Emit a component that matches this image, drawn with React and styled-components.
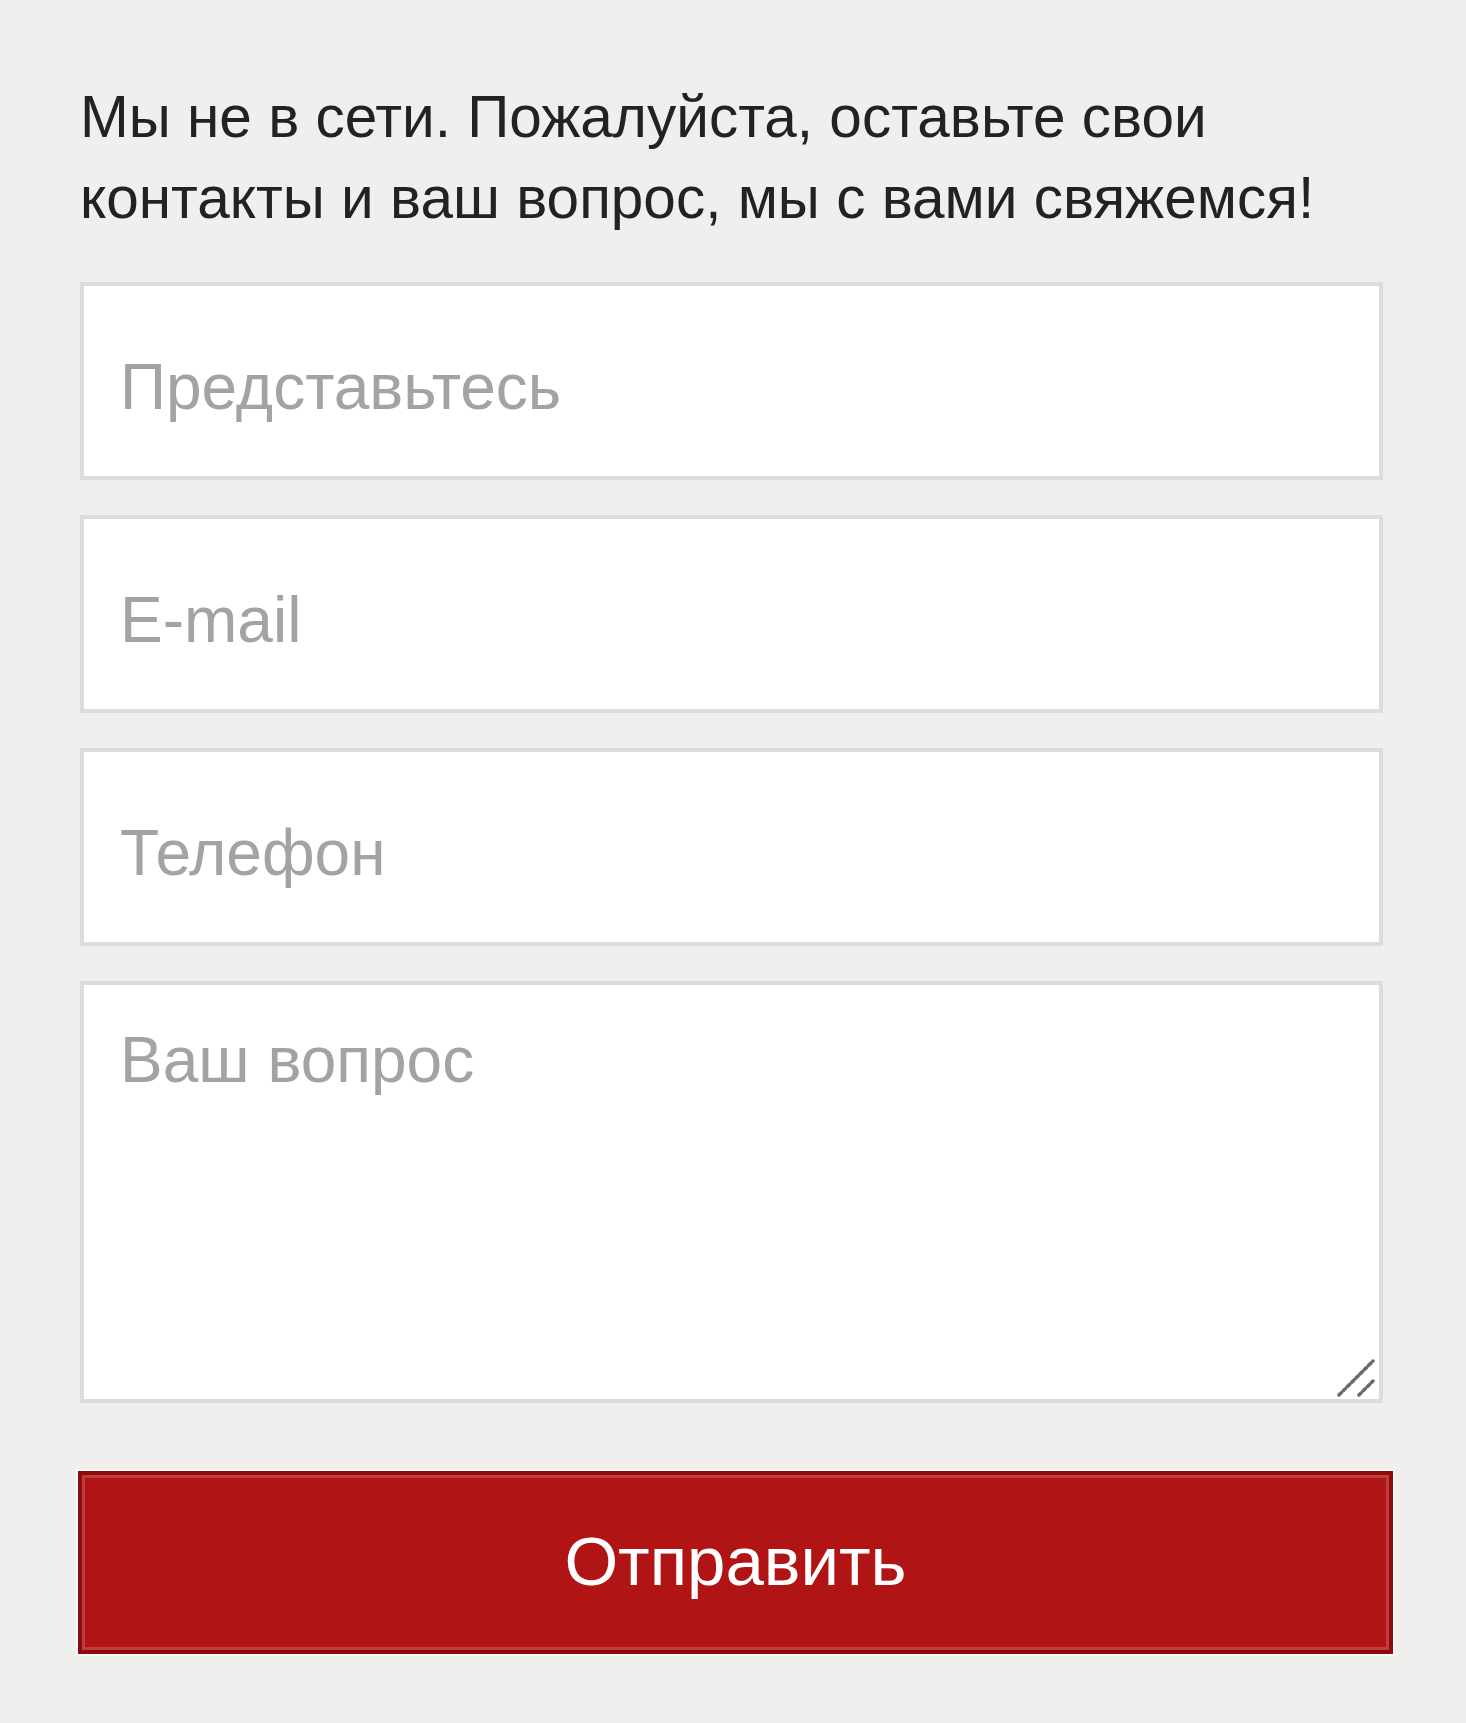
import React from "react";
import styled, { createGlobalStyle } from "styled-components";

const Global = createGlobalStyle`
  html, body {
    margin: 0;
    padding: 0;
    background: #efefed;
  }
  body {
    font-family: "Liberation Sans", Arial, sans-serif;
  }
`;

const Page = styled.div`
  min-height: 1723px;
  background: #efefed;
  padding: 76px 0 0 80px;
  box-sizing: border-box;
`;

const Form = styled.form`
  width: 1303px;
  display: flex;
  flex-direction: column;
`;

const Intro = styled.p`
  margin: 0 0 44px;
  font-size: 58.5px;
  line-height: 81px;
  color: #222222;
  letter-spacing: 0;
`;

const Fields = styled.div`
  display: flex;
  flex-direction: column;
  gap: 35px;
`;

const fieldBase = `
  box-sizing: border-box;
  width: 100%;
  border: 4px solid #dcdcdc;
  background: #ffffff;
  font-family: "Liberation Sans", Arial, sans-serif;
  font-size: 64px;
  color: #333;
  outline: none;
  margin: 0;
  &::placeholder {
    color: #a3a3a3;
    opacity: 1;
  }
`;

const Input = styled.input`
  ${fieldBase}
  height: 198px;
  padding: 12px 36px 0;
`;

const AreaWrap = styled.div`
  position: relative;
  height: 422px;
`;

const Area = styled.textarea`
  ${fieldBase}
  display: block;
  height: 100%;
  padding: 39px 36px 30px;
  line-height: 72px;
  resize: none;
`;

const Grip = styled.svg`
  position: absolute;
  right: 8px;
  bottom: 6px;
  width: 40px;
  height: 40px;
  pointer-events: none;
`;

const Submit = styled.button`
  box-sizing: border-box;
  margin: 68px 0 0 -2px;
  width: 1315px;
  height: 183px;
  background: #b01414;
  border: 4px solid #8e0b0b;
  box-shadow: inset 0 0 0 3px rgba(255, 255, 255, 0.18), 0 0 0 2px #f6fbfb;
  color: #ffffff;
  font-family: "Liberation Sans", Arial, sans-serif;
  font-size: 69px;
  cursor: pointer;
  padding: 0 0 3px;
`;

export default function App() {
  return (
    <>
      <Global />
      <Page>
        <Form onSubmit={(e) => e.preventDefault()}>
          <Intro>
            Мы не в сети. Пожалуйста, оставьте свои
            <br />
            контакты и ваш вопрос, мы с вами свяжемся!
          </Intro>
          <Fields>
            <Input type="text" placeholder="Представьтесь" />
            <Input type="email" placeholder="E-mail" />
            <Input type="tel" placeholder="Телефон" />
            <AreaWrap>
              <Area placeholder="Ваш вопрос" />
              <Grip viewBox="0 0 40 40">
                <line x1="4" y1="38" x2="38" y2="4" stroke="#6a6a6a" strokeWidth="3.5" strokeDasharray="3 3" strokeLinecap="round" />
                <line x1="24" y1="38" x2="38" y2="24" stroke="#6a6a6a" strokeWidth="3.5" strokeDasharray="3 3" strokeLinecap="round" />
              </Grip>
            </AreaWrap>
          </Fields>
          <Submit type="submit">Отправить</Submit>
        </Form>
      </Page>
    </>
  );
}
